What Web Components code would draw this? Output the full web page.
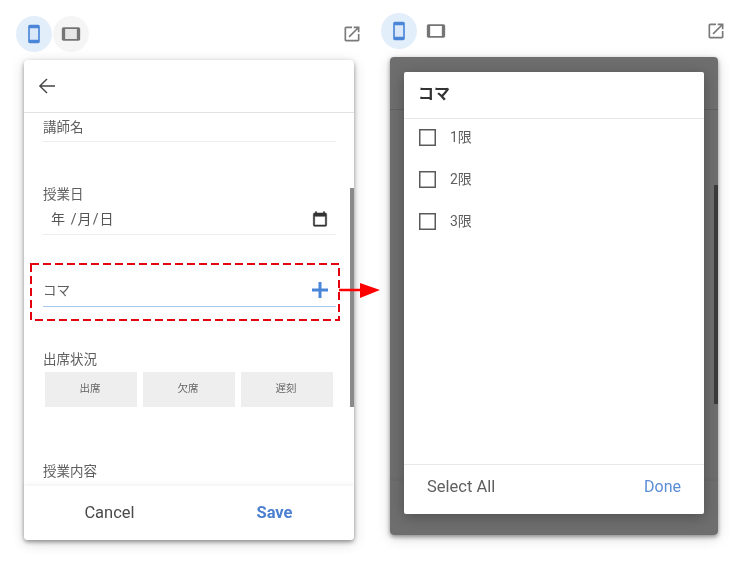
<!DOCTYPE html>
<html lang="ja">
<head>
<meta charset="utf-8">
<title>コマ</title>
<style>
  html, body { margin: 0; background: #fff; }
  body {
    width: 750px;
    height: 563px;
    overflow: hidden;
    position: relative;
    display: flex;
    align-items: flex-start;
    font-family: Roboto, "Noto Sans CJK JP", sans-serif;
    color: #5f5f5f;
    filter: blur(.4px);
  }
  device-pane.editor { margin: 16px 0 0 16px; width: 346px; --card-left: 8px; --card-width: 330px; --card-height: 480px; --phone-core: #dbe8fa; --tablet-core: #e6e6e6; }
  device-pane.picker { margin: 13px 0 0 19px; width: 345px; --card-left: 9px; --card-width: 328px; --card-height: 478px; --tablet-bg: transparent; --phone-core: #dbe8fa; --tablet-core: #fff; }
</style>
</head>
<body>
  <device-pane class="editor">
    <form-card></form-card>
  </device-pane>

  <device-pane class="picker">
    <form-card>
      <choice-dialog slot="overlay" heading="コマ">
        <choice-row>1限</choice-row>
        <choice-row>2限</choice-row>
        <choice-row>3限</choice-row>
      </choice-dialog>
    </form-card>
  </device-pane>

  <callout-mark></callout-mark>

<script>
class DevicePane extends HTMLElement {
  constructor() {
    super();
    this.attachShadow({ mode: "open" });
  }

  static get styles() {
    return /* css */`
      :host { display: block; flex: none; }
      .bar {
        display: flex;
        align-items: center;
        height: 36px;
        gap: 1px;
      }
      .round {
        width: 36px;
        height: 36px;
        border-radius: 50%;
        display: flex;
        align-items: center;
        justify-content: center;
      }
      .phone { background: #e3eefb; color: #4a86d8; }
      .tablet { background: var(--tablet-bg, #f5f5f5); color: #757575; }
      .open { margin-left: auto; color: #7a7a7a; display: flex; }
      svg { width: 20px; height: 20px; fill: currentColor; display: block; }
      .stage {
        margin: 8px 0 0 var(--card-left);
        width: var(--card-width);
        height: var(--card-height);
        display: flex;
      }
    `;
  }

  connectedCallback() {
    this.shadowRoot.innerHTML = /* html */`
    <style>${DevicePane.styles}</style>
    <div class="bar">
      <span class="round phone"><svg viewBox="0 0 24 24"><rect x="7" y="5" width="10" height="14" style="fill:var(--phone-core)"/><path d="M17 1.01L7 1c-1.1 0-2 .9-2 2v18c0 1.1.9 2 2 2h10c1.1 0 2-.9 2-2V3c0-1.1-.9-1.99-2-1.99zM17 19H7V5h10v14z"/></svg></span>
      <span class="round tablet"><svg viewBox="0 0 24 24"><rect x="5" y="6" width="14" height="12" style="fill:var(--tablet-core)"/><path d="M21 4H3c-1.1 0-2 .9-2 2v12c0 1.1.9 2 2 2h18c1.1 0 1.99-.9 1.99-2L23 6c0-1.1-.9-2-2-2zm-2 14H5V6h14v12z"/></svg></span>
      <span class="open"><svg viewBox="0 0 24 24"><path d="M19 19H5V5h7V3H5c-1.11 0-2 .9-2 2v14c0 1.1.89 2 2 2h14c1.1 0 2-.9 2-2v-7h-2v7zM14 3v2h3.59l-9.83 9.83 1.41 1.41L19 6.41V10h2V3h-7z"/></svg></span>
    </div>
    <div class="stage"><slot></slot></div>`;
  }
}

class FormCard extends HTMLElement {
  constructor() {
    super();
    this.attachShadow({ mode: "open" });
  }

  static get styles() {
    return /* css */`
      :host {
        display: flex;
        flex-direction: column;
        width: 100%;
        height: 100%;
        position: relative;
        background: #fff;
        border-radius: 4px;
        box-shadow: 0 2px 4px rgba(0,0,0,.38), 0 3px 14px rgba(0,0,0,.16);
        font-size: 13.5px;
        line-height: 20px;
      }
      .top {
        flex: none;
        height: 52px;
        border-bottom: 1px solid #e2e2e2;
        display: flex;
        align-items: center;
        padding-left: 11px;
        color: #444;
      }
      .top svg { width: 24px; height: 24px; fill: currentColor; display: block; }
      .body {
        flex: 1;
        min-height: 0;
        overflow: hidden;
        padding: 4px 18px 0 19px;
      }
      :host(.dimmed) .body > * { visibility: hidden; }
      .field { border-bottom: 1px solid #ececec; }
      .name { padding-bottom: 4px; }
      .date { margin-top: 42px; padding-bottom: 5px; }
      .date .value {
        display: flex;
        justify-content: space-between;
        align-items: center;
        margin-top: 5px;
        padding: 0 8px 0 8px;
        font-size: 14px;
        letter-spacing: 1.1px;
        color: #555;
      }
      .date svg { width: 16px; height: 16px; fill: #333; stroke: #333; stroke-width: .8; display: block; margin-bottom: 1px; }
      .koma {
        margin-top: 45px;
        padding-bottom: 6px;
        border-bottom-color: #a9c8ee;
        display: flex;
        justify-content: space-between;
        align-items: center;
        padding-right: 7px;
      }
      .koma svg { width: 18px; height: 18px; stroke: #4a86d8; stroke-width: 3; fill: none; display: block; }
      .status { margin-top: 42px; }
      .states {
        display: grid;
        grid-template-columns: repeat(3, 92px);
        gap: 6px;
        margin: 3px 0 0 2px;
      }
      .states span {
        box-sizing: border-box;
        height: 35px;
        padding: 0 2px 2px 0;
        background: #eee;
        display: flex;
        align-items: center;
        justify-content: center;
        font-size: 10.5px;
        color: #666;
      }
      .content { margin-top: 54px; }
      .foot {
        flex: none;
        height: 54px;
        background: #fff;
        border-radius: 0 0 4px 4px;
        box-shadow: 0 -2px 4px rgba(0,0,0,.05);
        position: relative;
        display: grid;
        grid-template-columns: 165px 165px;
        padding-left: 3px;
        align-items: center;
        justify-items: center;
        font-size: 16.5px;
      }
      .foot .cancel { color: #4a4a4a; }
      .foot .save { color: #4a7fd0; font-weight: 700; }
      .thumb {
        position: absolute;
        right: 0;
        top: 128px;
        width: 4px;
        height: 219px;
        background: #8a8a8a;
      }
      .scrim {
        position: absolute;
        inset: 0;
        border-radius: 4px;
        background: rgba(0,0,0,.57);
        display: none;
      }
      :host(.dimmed) .scrim { display: block; }
    `;
  }

  connectedCallback() {
    this.shadowRoot.innerHTML = /* html */`
    <style>${FormCard.styles}</style>
    <div class="top"><svg viewBox="0 0 24 24"><path d="M20 11.3H6.6l5.9-5.9-1-1L3.9 12l7.6 7.6 1-1-5.9-5.9H20z"/></svg></div>
    <div class="body">
      <div class="field name">講師名</div>
      <div class="field date">
        <div>授業日</div>
        <div class="value">
          <span>年 /月/日</span>
          <svg viewBox="0 0 24 24"><path d="M20 3h-1V1h-2v2H7V1H5v2H4c-1.1 0-2 .9-2 2v16c0 1.1.9 2 2 2h16c1.1 0 2-.9 2-2V5c0-1.1-.9-2-2-2zm0 18H4V8h16v13z"/></svg>
        </div>
      </div>
      <div class="field koma">
        <span>コマ</span>
        <svg viewBox="0 0 18 18"><path d="M9 1v16M1 9h16"/></svg>
      </div>
      <div class="status">出席状況</div>
      <div class="states"><span>出席</span><span>欠席</span><span>遅刻</span></div>
      <div class="content">授業内容</div>
    </div>
    <div class="foot"><span class="cancel">Cancel</span><span class="save">Save</span></div>
    <div class="thumb"></div>
    <div class="scrim"></div>
    <slot name="overlay"></slot>`;
    this.classList.toggle("dimmed", !!this.querySelector("[slot=overlay]"));
  }
}

class ChoiceDialog extends HTMLElement {
  constructor() {
    super();
    this.attachShadow({ mode: "open" });
  }

  static get styles() {
    return /* css */`
      :host {
        position: absolute;
        left: 14px;
        right: 14px;
        top: 15px;
        bottom: 21px;
        background: #fff;
        border-radius: 2px;
        box-shadow: 0 3px 14px rgba(0,0,0,.28);
        display: flex;
        flex-direction: column;
        color: #5f5f5f;
      }
      header {
        flex: none;
        box-sizing: border-box;
        height: 47px;
        padding: 0 0 2px 14px;
        border-bottom: 1px solid #e8e8e8;
        display: flex;
        align-items: center;
        font-size: 16px;
        font-weight: 700;
        color: #333;
      }
      .list {
        flex: 1;
        min-height: 0;
        display: flex;
        flex-direction: column;
        gap: 6px;
      }
      footer {
        flex: none;
        box-sizing: border-box;
        height: 50px;
        padding: 0 23px 6px;
        border-top: 1px solid #e8e8e8;
        display: flex;
        justify-content: space-between;
        align-items: center;
        font-size: 16.5px;
      }
      .done { color: #5b8dd6; font-size: 16px; }
    `;
  }

  connectedCallback() {
    this.shadowRoot.innerHTML = /* html */`
    <style>${ChoiceDialog.styles}</style>
    <header>${this.getAttribute("heading")}</header>
    <div class="list"><slot></slot></div>
    <footer><span>Select All</span><span class="done">Done</span></footer>`;
  }
}

class ChoiceRow extends HTMLElement {
  constructor() {
    super();
    this.attachShadow({ mode: "open" });
  }

  static get styles() {
    return /* css */`
      :host {
        display: flex;
        align-items: center;
        height: 36px;
        padding-left: 15px;
        gap: 14px;
        font-size: 14px;
      }
      svg { width: 17px; height: 17px; flex: none; display: block; }
    `;
  }

  connectedCallback() {
    this.shadowRoot.innerHTML = /* html */`
    <style>${ChoiceRow.styles}</style>
    <svg viewBox="0 0 17 17"><rect x=".75" y=".75" width="15.5" height="15.5" fill="none" stroke="#5a5a5a" stroke-width="1.5"/></svg><slot></slot>`;
  }
}

class CalloutMark extends HTMLElement {
  constructor() {
    super();
    this.attachShadow({ mode: "open" });
  }

  connectedCallback() {
    this.shadowRoot.innerHTML = /* html */`
    <style>
      :host { position: absolute; left: 29px; top: 262px; width: 352px; height: 60px; pointer-events: none; }
      svg { display: block; width: 352px; height: 60px; }
    </style>
    <svg viewBox="0 0 352 60">
      <rect x="2" y="2" width="308" height="56" fill="none" stroke="#e3000f" stroke-width="2" stroke-dasharray="8 4"/>
      <path d="M310 28h23" stroke="#f00" stroke-width="2.5" fill="none"/>
      <path d="M331 21l20 7-20 8z" fill="#f00"/>
    </svg>`;
  }
}

customElements.define("device-pane", DevicePane);
customElements.define("form-card", FormCard);
customElements.define("choice-dialog", ChoiceDialog);
customElements.define("choice-row", ChoiceRow);
customElements.define("callout-mark", CalloutMark);
</script>
</body>
</html>
